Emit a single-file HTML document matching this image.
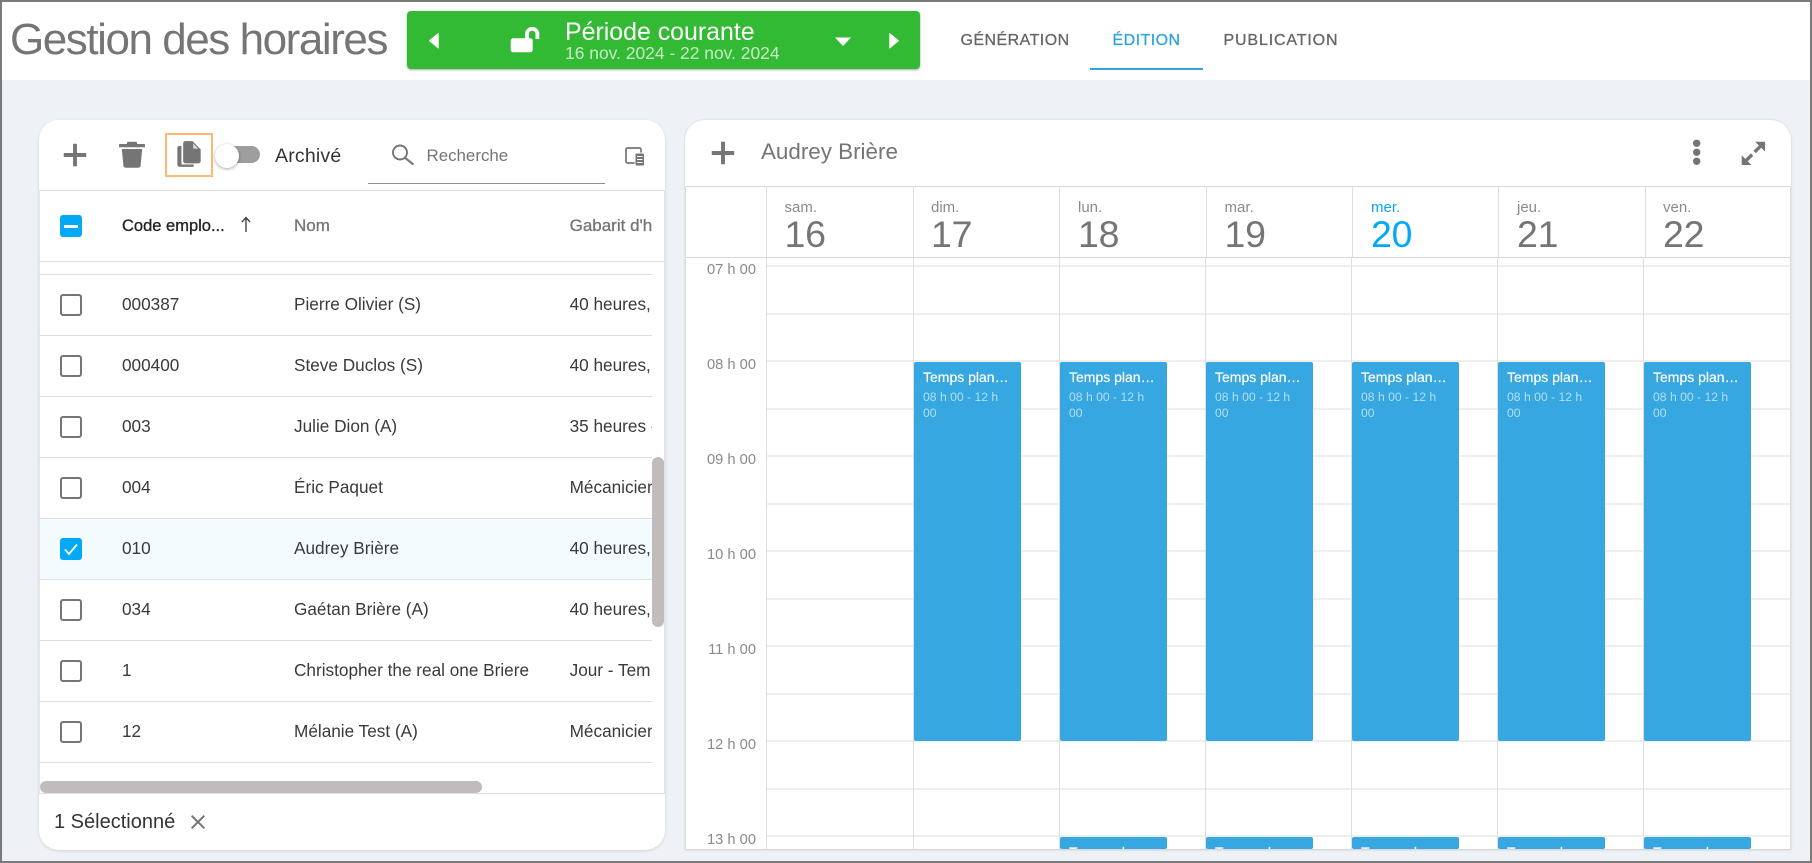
<!DOCTYPE html>
<html lang="fr">
<head>
<meta charset="utf-8">
<title>Gestion des horaires</title>
<style>
html,body{margin:0;padding:0;width:1812px;height:863px;overflow:hidden;background:#eef1f6;font-family:"Liberation Sans",Arial,sans-serif}
*{box-sizing:border-box}
.a{position:absolute}
.t{position:absolute;white-space:nowrap;line-height:20px;height:20px}
.frame{position:absolute;left:0;top:0;width:1812px;height:863px;border:2px solid #7a7a7a;z-index:50;pointer-events:none}
.tab{font-size:16px;letter-spacing:.45px;color:#666;-webkit-text-stroke:.3px #666;top:30.5px}
.row{font-size:17.2px;color:#3a3a3a}
.cb{position:absolute;left:60px;width:22px;height:22px;border:2.5px solid #757575;border-radius:3px;background:#fff}
.hl{position:absolute;left:39px;width:613px;height:1px;background:#e0e0e0}
.gl{position:absolute;left:767px;width:1023px;height:2px;background:#eee}
.vl{position:absolute;width:1px;background:#dedede}
.dn{position:absolute;white-space:nowrap;font-size:15px;line-height:20px;color:#8a8a8a;top:198px}
.dd{position:absolute;white-space:nowrap;font-size:37.5px;line-height:40px;color:#757575;top:214px;letter-spacing:-.2px}
.lb{position:absolute;white-space:nowrap;font-size:14.7px;line-height:20px;color:#8a8a8a;width:70px;left:686px;text-align:right}
.ev{position:absolute;width:107px;background:#36a7e0;border-radius:2px;color:#fff}
.ev b{position:absolute;left:9px;top:5px;font-weight:normal;font-size:14px;line-height:20px;-webkit-text-stroke:.2px #fff;white-space:nowrap}
.ev i{position:absolute;left:9px;top:27.5px;font-style:normal;font-size:12.2px;line-height:16px;color:#b3dff5;white-space:nowrap}
</style>
</head>
<body>
<!-- Header -->
<div class="a" style="left:0;top:0;width:1812px;height:80px;background:#fff"></div>
<div class="t" style="left:10px;top:14px;height:52px;line-height:52px;font-size:44px;letter-spacing:-1.45px;color:#757575">Gestion des horaires</div>

<div class="a" style="left:407px;top:11px;width:513px;height:58px;background:#33ba35;border-radius:4px;box-shadow:0 1px 2px rgba(0,0,0,.35)"></div>
<svg class="a" style="left:407px;top:11px" width="513" height="58" viewBox="407 11 513 58">
  <path d="M438.5 33v15.5L429 40.7z" fill="#fff" stroke="#fff" stroke-width=".5" stroke-linejoin="round"/>
  <path d="M889.5 33v15.5l9.3-7.8z" fill="#fff" stroke="#fff" stroke-width=".5" stroke-linejoin="round"/>
  <path d="M835 37.5h16L843 46z" fill="#fff"/>
  <rect x="510.7" y="38.3" width="22" height="14" rx="2.5" fill="#fff"/>
  <path d="M527 39v-5a5.2 5.2 0 0 1 10.4 0v5" fill="none" stroke="#fff" stroke-width="3.8"/>
</svg>
<div class="t" style="left:565px;top:20px;height:24px;line-height:24px;font-size:24.9px;color:#fff">Période courante</div>
<div class="t" style="left:565px;top:43px;font-size:17.45px;color:#c7ecc2">16 nov. 2024 - 22 nov. 2024</div>

<div class="t tab" style="left:960.5px">GÉNÉRATION</div>
<div class="t tab" style="left:1112.5px;color:#2fa4dc;-webkit-text-stroke:.3px #2fa4dc">ÉDITION</div>
<div class="t tab" style="left:1223.5px;letter-spacing:.85px">PUBLICATION</div>
<div class="a" style="left:1090px;top:68px;width:113px;height:2px;background:#2fa4dc"></div>

<!-- Left panel -->
<div class="a" style="left:39px;top:120px;width:626px;height:730px;background:#fff;border-radius:20px;box-shadow:0 1px 3px rgba(0,0,0,.12)"></div>

<svg class="a" style="left:57px;top:136.5px" width="36" height="36" viewBox="0 0 24 24"><path fill="#757575" d="M19.5 13.3h-6.2v6.2h-2.6v-6.2H4.5v-2.6h6.2V4.5h2.6v6.2h6.2z"/></svg>
<svg class="a" style="left:117px;top:140px" width="30" height="30" viewBox="117 140 30 30">
  <path fill="#757575" d="M127 144v-1.2c0-.6.5-1.1 1.1-1.1h7.8c.6 0 1.1.5 1.1 1.1v1.2h7.2c.5 0 .8.4.8.8v2.4H119v-2.4c0-.4.3-.8.8-.8z"/>
  <path fill="#757575" d="M121.8 149h20.4l-1.6 16.8c-.1 1.1-1 1.9-2.1 1.9h-13c-1.1 0-2-.8-2.1-1.9z"/>
</svg>
<div class="a" style="left:165px;top:133px;width:48px;height:44px;border:2px solid #fdb777"></div>
<svg class="a" style="left:175px;top:140px" width="28" height="28" viewBox="0 0 24 24"><path fill="#757575" d="M5.5 5H4c-1.1 0-2 .9-2 2v14c0 1.1.9 2 2 2h12v-2H5.5z"/><path fill="#757575" d="M15 1H9C7.9 1 7 1.9 7 3v15c0 1.1.9 2 2 2h11c1.1 0 2-.9 2-2V8z"/><path fill="#fff" d="M15.6 3v4.4H20z" opacity=".75"/></svg>

<div class="a" style="left:225px;top:146px;width:35px;height:17px;border-radius:9px;background:#9e9e9e"></div>
<div class="a" style="left:215px;top:143.5px;width:24px;height:24px;border-radius:50%;background:#fff;box-shadow:0 1px 3px rgba(0,0,0,.35)"></div>
<div class="t" style="left:275px;top:146px;font-size:19.5px;letter-spacing:.2px;color:#333">Archivé</div>

<svg class="a" style="left:388px;top:142px" width="28" height="26" viewBox="388 142 28 26">
  <circle cx="400" cy="152.5" r="7" fill="none" stroke="#757575" stroke-width="1.9"/>
  <path d="M405 157.8l8.4 6.7" fill="none" stroke="#757575" stroke-width="2.1"/>
</svg>
<div class="t" style="left:426.5px;top:146px;font-size:16.9px;color:#757575">Recherche</div>
<div class="a" style="left:368px;top:183px;width:237px;height:1px;background:#8f8f8f"></div>

<svg class="a" style="left:624px;top:146px" width="22" height="22" viewBox="0 0 22 22">
  <rect x="2" y="2" width="15" height="15" rx="1.5" fill="none" stroke="#757575" stroke-width="1.7"/>
  <rect x="11" y="7" width="9.5" height="13" rx="1.5" fill="#757575" stroke="#fff" stroke-width="1"/>
  <path d="M13 10.5h5.5M13 13.5h5.5M13 16.5h5.5" stroke="#fff" stroke-width="1"/>
</svg>

<div class="a" style="left:39px;top:190px;width:626px;height:1px;background:#dedede"></div>
<div class="a" style="left:39px;top:190px;width:1px;height:603px;background:#e8e8e8"></div>
<div class="a" style="left:664px;top:190px;width:1px;height:603px;background:#e4e4e4"></div>
<div class="a" style="left:39px;top:261px;width:626px;height:1px;background:#e0e0e0"></div>

<!-- Table header -->
<div class="a" style="left:60px;top:215px;width:22px;height:22px;border-radius:3px;background:#03a9f4"></div>
<div class="a" style="left:64px;top:224.5px;width:14px;height:3px;background:#fff"></div>
<div class="t" style="left:122px;top:216px;font-size:16.5px;color:#222;-webkit-text-stroke:.3px #222">Code emplo...</div>
<svg class="a" style="left:239px;top:214px" width="14" height="20" viewBox="0 0 14 20"><path d="M7 18V4M3 8l4-4.5L11 8" fill="none" stroke="#444" stroke-width="1.4"/></svg>
<div class="t" style="left:294px;top:216px;font-size:17px;color:#757575;-webkit-text-stroke:.3px #757575">Nom</div>
<div class="a" style="left:569.6px;top:210px;width:84px;height:32px;overflow:hidden"><div class="t" style="left:0;top:6px;font-size:17px;color:#757575;-webkit-text-stroke:.3px #757575">Gabarit d'h</div></div>

<!-- Rows -->
<div class="a" style="left:40px;top:519px;width:612px;height:60px;background:#f3fbff"></div>
<div class="hl" style="top:274px"></div>
<div class="hl" style="top:335px"></div>
<div class="hl" style="top:396px"></div>
<div class="hl" style="top:457px"></div>
<div class="hl" style="top:518px"></div>
<div class="hl" style="top:579px"></div>
<div class="hl" style="top:640px"></div>
<div class="hl" style="top:701px"></div>
<div class="hl" style="top:762px"></div>

<div class="cb" style="top:294px"></div>
<div class="cb" style="top:355px"></div>
<div class="cb" style="top:416px"></div>
<div class="cb" style="top:477px"></div>
<div class="a" style="left:60px;top:538px;width:22px;height:22px;border-radius:3px;background:#03a9f4"></div>
<svg class="a" style="left:60px;top:538px" width="22" height="22" viewBox="0 0 22 22"><path d="M5 11.5l4 4.5 8-9.5" fill="none" stroke="#fff" stroke-width="1.8"/></svg>
<div class="cb" style="top:599px"></div>
<div class="cb" style="top:660px"></div>
<div class="cb" style="top:721px"></div>

<div class="t row" style="left:122px;top:294px">000387</div>
<div class="t row" style="left:122px;top:355px">000400</div>
<div class="t row" style="left:122px;top:416px">003</div>
<div class="t row" style="left:122px;top:477px">004</div>
<div class="t row" style="left:122px;top:538px">010</div>
<div class="t row" style="left:122px;top:599px">034</div>
<div class="t row" style="left:122px;top:660px">1</div>
<div class="t row" style="left:122px;top:721px">12</div>

<div class="t row" style="left:294px;top:294px">Pierre Olivier (S)</div>
<div class="t row" style="left:294px;top:355px">Steve Duclos (S)</div>
<div class="t row" style="left:294px;top:416px">Julie Dion (A)</div>
<div class="t row" style="left:294px;top:477px">Éric Paquet</div>
<div class="t row" style="left:294px;top:538px">Audrey Brière</div>
<div class="t row" style="left:294px;top:599px">Gaétan Brière (A)</div>
<div class="t row" style="left:294px;top:660px">Christopher the real one Briere</div>
<div class="t row" style="left:294px;top:721px">Mélanie Test (A)</div>

<div class="a" style="left:569.6px;top:280px;width:82.4px;height:480px;overflow:hidden">
  <div class="t row" style="left:0;top:14px">40 heures, lun</div>
  <div class="t row" style="left:0;top:75px">40 heures, lun</div>
  <div class="t row" style="left:0;top:136px">35 heures - lun</div>
  <div class="t row" style="left:0;top:197px">Mécanicien</div>
  <div class="t row" style="left:0;top:258px">40 heures, lun</div>
  <div class="t row" style="left:0;top:319px">40 heures, lun</div>
  <div class="t row" style="left:0;top:380px">Jour - Tem</div>
  <div class="t row" style="left:0;top:441px">Mécanicien</div>
</div>

<!-- Scrollbars -->
<div class="a" style="left:652px;top:457px;width:11.5px;height:170px;background:#c1bcbc;border-radius:6px"></div>
<div class="a" style="left:40px;top:781px;width:442px;height:12px;background:#c1bcbc;border-radius:6px"></div>
<div class="a" style="left:39px;top:793px;width:626px;height:1px;background:#e0e0e0"></div>

<!-- Footer -->
<div class="t" style="left:54px;top:812px;font-size:20px;color:#333">1 Sélectionné</div>
<svg class="a" style="left:186px;top:810px" width="24" height="24" viewBox="0 0 24 24"><path fill="#757575" d="M19 6.41L17.59 5 12 10.59 6.41 5 5 6.41 10.59 12 5 17.59 6.41 19 12 13.41 17.59 19 19 17.59 13.41 12z"/></svg>

<!-- Right panel -->
<div class="a" style="left:685px;top:120px;width:1106px;height:730px;background:#fff;border-radius:20px 20px 0 0;box-shadow:0 0 2px rgba(0,0,0,.15)"></div>
<svg class="a" style="left:705px;top:135px" width="36" height="36" viewBox="0 0 24 24"><path fill="#757575" d="M19.5 13.3h-6.2v6.2h-2.6v-6.2H4.5v-2.6h6.2V4.5h2.6v6.2h6.2z"/></svg>
<div class="t" style="left:761px;top:140px;height:24px;line-height:24px;font-size:22.4px;color:#757575">Audrey Brière</div>
<svg class="a" style="left:1690px;top:138px" width="14" height="28" viewBox="0 0 14 28">
  <circle cx="6.7" cy="5.3" r="3.7" fill="#757575"/><circle cx="6.7" cy="14.3" r="3.7" fill="#757575"/><circle cx="6.7" cy="23.3" r="3.7" fill="#757575"/>
</svg>
<svg class="a" style="left:1740px;top:140px" width="27" height="27" viewBox="0 0 27 27">
  <path fill="#757575" d="M25 1.7V11.5L15.2 1.7zM1.7 25V15.2L11.5 25z"/>
  <path d="M20.5 6.2L14.6 12.1M6.2 20.5L12.1 14.6" fill="none" stroke="#757575" stroke-width="3.4"/>
</svg>

<div class="a" style="left:685px;top:186px;width:1106px;height:1px;background:#d8d8d8"></div>
<div class="a" style="left:685px;top:257px;width:1106px;height:1px;background:#d8d8d8"></div>
<div class="a" style="left:685px;top:186px;width:1px;height:664px;background:#dedede"></div>
<div class="a" style="left:1790px;top:186px;width:1px;height:664px;background:#dedede"></div>
<div class="a" style="left:685px;top:849px;width:1106px;height:1px;background:#d8d8d8"></div>

<!-- header verticals -->
<div class="vl" style="left:766px;top:186px;height:71px"></div>
<div class="vl" style="left:913px;top:186px;height:71px"></div>
<div class="vl" style="left:1059px;top:186px;height:71px"></div>
<div class="vl" style="left:1206px;top:186px;height:71px"></div>
<div class="vl" style="left:1352px;top:186px;height:71px"></div>
<div class="vl" style="left:1498px;top:186px;height:71px"></div>
<div class="vl" style="left:1645px;top:186px;height:71px"></div>

<div class="dn" style="left:784.5px">sam.</div><div class="dd" style="left:784.5px">16</div>
<div class="dn" style="left:931px">dim.</div><div class="dd" style="left:931px">17</div>
<div class="dn" style="left:1078px">lun.</div><div class="dd" style="left:1078px">18</div>
<div class="dn" style="left:1224.5px">mar.</div><div class="dd" style="left:1224.5px">19</div>
<div class="dn" style="left:1371px;color:#03a9f4">mer.</div><div class="dd" style="left:1371px;color:#03a9f4">20</div>
<div class="dn" style="left:1517px">jeu.</div><div class="dd" style="left:1517px">21</div>
<div class="dn" style="left:1663px">ven.</div><div class="dd" style="left:1663px">22</div>

<!-- grid lines -->
<div class="gl" style="top:265px"></div><div class="gl" style="top:313px"></div>
<div class="gl" style="top:360px"></div><div class="gl" style="top:408px"></div>
<div class="gl" style="top:455px"></div><div class="gl" style="top:503px"></div>
<div class="gl" style="top:550px"></div><div class="gl" style="top:598px"></div>
<div class="gl" style="top:645px"></div><div class="gl" style="top:693px"></div>
<div class="gl" style="top:740px"></div><div class="gl" style="top:788px"></div>
<div class="gl" style="top:835px"></div>

<!-- body verticals -->
<div class="vl" style="left:766px;top:258px;height:591px"></div>
<div class="vl" style="left:913px;top:258px;height:591px"></div>
<div class="vl" style="left:1059px;top:258px;height:591px"></div>
<div class="vl" style="left:1205px;top:258px;height:591px"></div>
<div class="vl" style="left:1351px;top:258px;height:591px"></div>
<div class="vl" style="left:1497px;top:258px;height:591px"></div>
<div class="vl" style="left:1643px;top:258px;height:591px"></div>

<div class="lb" style="top:260px">07 h 00</div>
<div class="lb" style="top:355px">08 h 00</div>
<div class="lb" style="top:450px">09 h 00</div>
<div class="lb" style="top:545px">10 h 00</div>
<div class="lb" style="top:640px">11 h 00</div>
<div class="lb" style="top:735px">12 h 00</div>
<div class="lb" style="top:830px">13 h 00</div>

<!-- Events -->
<div class="ev" style="left:914px;top:361.5px;height:379px"><b>Temps plan…</b><i>08 h 00 - 12 h<br>00</i></div>
<div class="ev" style="left:1060px;top:361.5px;height:379px"><b>Temps plan…</b><i>08 h 00 - 12 h<br>00</i></div>
<div class="ev" style="left:1206px;top:361.5px;height:379px"><b>Temps plan…</b><i>08 h 00 - 12 h<br>00</i></div>
<div class="ev" style="left:1352px;top:361.5px;height:379px"><b>Temps plan…</b><i>08 h 00 - 12 h<br>00</i></div>
<div class="ev" style="left:1498px;top:361.5px;height:379px"><b>Temps plan…</b><i>08 h 00 - 12 h<br>00</i></div>
<div class="ev" style="left:1644px;top:361.5px;height:379px"><b>Temps plan…</b><i>08 h 00 - 12 h<br>00</i></div>

<div class="ev" style="left:1060px;top:836.5px;height:12.5px;overflow:hidden"><b>Temps plan…</b></div>
<div class="ev" style="left:1206px;top:836.5px;height:12.5px;overflow:hidden"><b>Temps plan…</b></div>
<div class="ev" style="left:1352px;top:836.5px;height:12.5px;overflow:hidden"><b>Temps plan…</b></div>
<div class="ev" style="left:1498px;top:836.5px;height:12.5px;overflow:hidden"><b>Temps plan…</b></div>
<div class="ev" style="left:1644px;top:836.5px;height:12.5px;overflow:hidden"><b>Temps plan…</b></div>

<div class="frame"></div>
</body>
</html>
